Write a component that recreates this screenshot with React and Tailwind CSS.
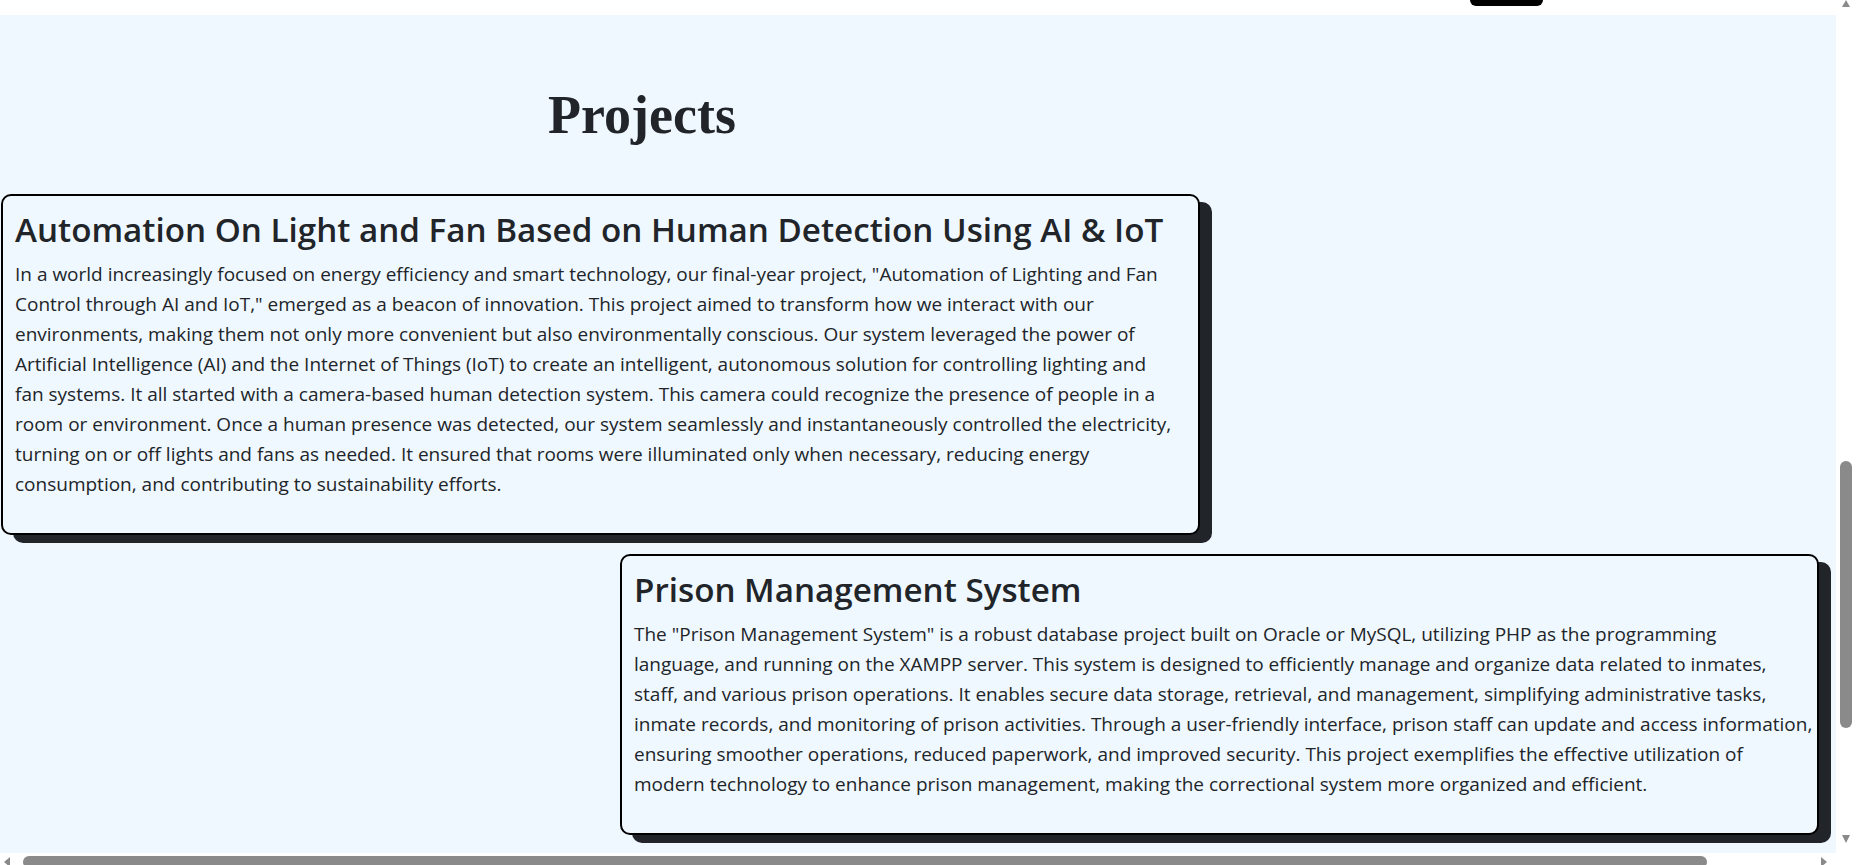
import React from "react";

const projects = [
  {
    title: "Automation On Light and Fan Based on Human Detection Using AI & IoT",
    offset: "ml-[1px]",
    lines: [
      'In a world increasingly focused on energy efficiency and smart technology, our final-year project, "Automation of Lighting and Fan',
      'Control through AI and IoT," emerged as a beacon of innovation. This project aimed to transform how we interact with our',
      "environments, making them not only more convenient but also environmentally conscious. Our system leveraged the power of",
      "Artificial Intelligence (AI) and the Internet of Things (IoT) to create an intelligent, autonomous solution for controlling lighting and",
      "fan systems. It all started with a camera-based human detection system. This camera could recognize the presence of people in a",
      "room or environment. Once a human presence was detected, our system seamlessly and instantaneously controlled the electricity,",
      "turning on or off lights and fans as needed. It ensured that rooms were illuminated only when necessary, reducing energy",
      "consumption, and contributing to sustainability efforts.",
    ],
  },
  {
    title: "Prison Management System",
    offset: "ml-[620px] mt-[19px]",
    lines: [
      'The "Prison Management System" is a robust database project built on Oracle or MySQL, utilizing PHP as the programming',
      "language, and running on the XAMPP server. This system is designed to efficiently manage and organize data related to inmates,",
      "staff, and various prison operations. It enables secure data storage, retrieval, and management, simplifying administrative tasks,",
      "inmate records, and monitoring of prison activities. Through a user-friendly interface, prison staff can update and access information,",
      "ensuring smoother operations, reduced paperwork, and improved security. This project exemplifies the effective utilization of",
      "modern technology to enhance prison management, making the correctional system more organized and efficient.",
    ],
  },
];

const ProjectCard = ({ title, lines, offset }) => (
  <div
    className={`${offset} w-[1199px] bg-[#f0f8ff] border-2 border-black rounded-[10px] shadow-[12px_8px_0_#212529] px-[12px] pt-[14px] pb-[18px]`}
  >
    <h2 className="text-[33.2px] leading-[40px] font-semibold text-[#212529] whitespace-nowrap">
      {title}
    </h2>
    <p className="mt-[9px] mb-[16px] text-[19px] leading-[30px] text-[#212529]">
      {lines.map((line, i) => (
        <span key={i} className="block whitespace-nowrap">
          {line}
        </span>
      ))}
    </p>
  </div>
);

export default function App() {
  return (
    <div
      className="w-[1856px] h-[865px] flex flex-col overflow-hidden bg-white"
      style={{ fontFamily: '"Open Sans", "Noto Sans", sans-serif' }}
    >
      <div className="flex flex-1 min-h-0">
        <div className="flex-1 flex flex-col min-w-0">
          {/* bottom edge of the navbar */}
          <div className="h-[15px] bg-white flex">
            <div className="ml-[1470px] w-[73px] h-[6px] bg-black rounded-b-[6px]" />
          </div>

          <main className="flex-1 bg-[#f0f8ff] pt-[70px]">
            <div className="w-[1284px] h-[60px] text-center">
              <h1
                className="text-[54px] leading-[60px] font-bold text-[#212529]"
                style={{ fontFamily: '"Liberation Serif", "DejaVu Serif", serif' }}
              >
                Projects
              </h1>
            </div>

            <div className="mt-[49px] flex flex-col">
              {projects.map((p) => (
                <ProjectCard key={p.title} {...p} />
              ))}
            </div>
          </main>
        </div>

        {/* vertical scrollbar */}
        <div className="w-[20px] bg-white flex flex-col items-center">
          <svg width="12" height="7" viewBox="0 0 12 7">
            <path d="M2 7 L6 0 L10 7 Z" fill="#8a8a8a" />
          </svg>
          <div className="h-[454px]" />
          <div className="w-[12px] h-[267px] rounded-full bg-[#8a8a8a]" />
          <div className="flex-1" />
          <svg width="10" height="8" viewBox="0 0 10 8" className="mb-[10px]">
            <path d="M1 0 L9 0 L5 8 Z" fill="#8a8a8a" />
          </svg>
        </div>
      </div>

      {/* horizontal scrollbar */}
      <div className="h-[12px] bg-white flex items-start">
        <svg width="8" height="12" viewBox="0 0 8 12" className="ml-[3px] mt-[3px]">
          <path d="M7 1 L1 6 L7 11 Z" fill="#8a8a8a" />
        </svg>
        <div className="ml-[12px] mt-[3px] w-[1684px] h-[12px] rounded-full bg-[#8a8a8a]" />
        <svg width="8" height="12" viewBox="0 0 8 12" className="ml-[113px] mt-[3px]">
          <path d="M1 1 L7 6 L1 11 Z" fill="#8a8a8a" />
        </svg>
      </div>
    </div>
  );
}
